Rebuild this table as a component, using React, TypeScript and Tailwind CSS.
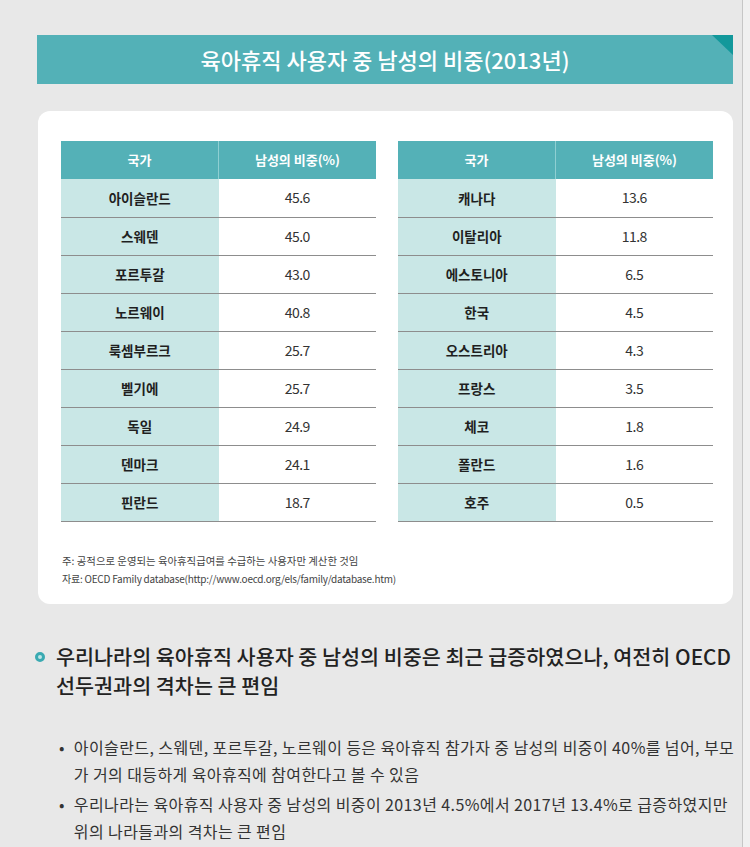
const left: [string, string][] = [
  ['아이슬란드', '45.6'],
  ['스웨덴', '45.0'],
  ['포르투갈', '43.0'],
  ['노르웨이', '40.8'],
  ['룩셈부르크', '25.7'],
  ['벨기에', '25.7'],
  ['독일', '24.9'],
  ['덴마크', '24.1'],
  ['핀란드', '18.7'],
];

const right: [string, string][] = [
  ['캐나다', '13.6'],
  ['이탈리아', '11.8'],
  ['에스토니아', '6.5'],
  ['한국', '4.5'],
  ['오스트리아', '4.3'],
  ['프랑스', '3.5'],
  ['체코', '1.8'],
  ['폴란드', '1.6'],
  ['호주', '0.5'],
];

function ShareTable({ rows }: { rows: [string, string][] }) {
  return (
    <table className="w-full border-collapse text-center">
      <thead>
        <tr className="h-[38px] bg-[#54b1b7] text-[13px] font-bold text-white">
          <th className="w-1/2 border-r border-[#8fcfd2] font-bold">국가</th>
          <th className="w-1/2 font-bold">남성의 비중(%)</th>
        </tr>
      </thead>
      <tbody>
        {rows.map(([country, value]) => (
          <tr key={country} className="h-[38px] border-b border-[#8d8d8d]">
            <td className="bg-[#c9e7e6] text-[13.5px] font-bold text-[#1f1f1f]">
              {country}
            </td>
            <td className="bg-white text-[14px] tracking-[-0.04em] text-[#333]">
              {value}
            </td>
          </tr>
        ))}
      </tbody>
    </table>
  );
}

export default function App() {
  return (
    <div
      className="flex min-h-[847px] w-[750px] bg-[#e8e8e8]"
      style={{ fontFamily: '"Noto Sans CJK KR", "Noto Sans", sans-serif' }}
    >
      <main className="w-[742px] pt-[35px]">
        {/* title bar */}
        <div className="relative ml-[37px] flex h-[49px] w-[696px] items-center justify-center bg-[#53b1b7]">
          <h1 className="text-[22px] font-medium tracking-normal text-white">
            육아휴직 사용자 중 남성의 비중(2013년)
          </h1>
          <svg
            className="absolute right-0 top-0"
            width="21"
            height="20"
            viewBox="0 0 21 20"
          >
            <polygon points="0,0 21,0 21,20" fill="#12989b" />
          </svg>
        </div>

        {/* table card */}
        <div className="ml-[38px] mt-[27px] w-[695px] rounded-[12px] bg-white pb-[16px] pl-[23px] pr-[20px] pt-[30px]">
          <div className="grid grid-cols-2 gap-[22px]">
            <ShareTable rows={left} />
            <ShareTable rows={right} />
          </div>
          <div className="mt-[30px] pl-[1px] leading-[18px] text-[#444]">
            <p className="text-[10.4px]">
              주: 공적으로 운영되는 육아휴직급여를 수급하는 사용자만 계산한 것임
            </p>
            <p className="text-[10px] tracking-[-0.023em]">
              자료: OECD Family database(http://www.oecd.org/els/family/database.htm)
            </p>
          </div>
        </div>

        {/* summary */}
        <div className="ml-[35px] mt-[38px] flex gap-[11px]">
          <span className="mt-[10px] h-[10px] w-[10px] shrink-0 rounded-full border-[3px] border-[#3aaab2] bg-[#bfe6e8]" />
          <p className="text-[20.7px] font-medium leading-[29px] tracking-normal text-[#222]">
            우리나라의 육아휴직 사용자 중 남성의 비중은 최근 급증하였으나, 여전히 OECD
            <br />
            선두권과의 격차는 큰 편임
          </p>
        </div>

        <ul className="ml-[59px] mt-[34px] flex flex-col gap-[3px] text-[16px] leading-[27px] tracking-[0.025em] text-[#333]">
          <li className="flex gap-[9px]">
            <span className="shrink-0">•</span>
            <span>
              아이슬란드, 스웨덴, 포르투갈, 노르웨이 등은 육아휴직 참가자 중 남성의 비중이 40%를 넘어, 부모
              <br />
              가 거의 대등하게 육아휴직에 참여한다고 볼 수 있음
            </span>
          </li>
          <li className="flex gap-[9px]">
            <span className="shrink-0">•</span>
            <span>
              우리나라는 육아휴직 사용자 중 남성의 비중이 2013년 4.5%에서 2017년 13.4%로 급증하였지만
              <br />
              위의 나라들과의 격차는 큰 편임
            </span>
          </li>
        </ul>
      </main>
      <div className="w-[8px] border-l border-[#c6c6c6] bg-[#f0f0f0]" />
    </div>
  );
}
